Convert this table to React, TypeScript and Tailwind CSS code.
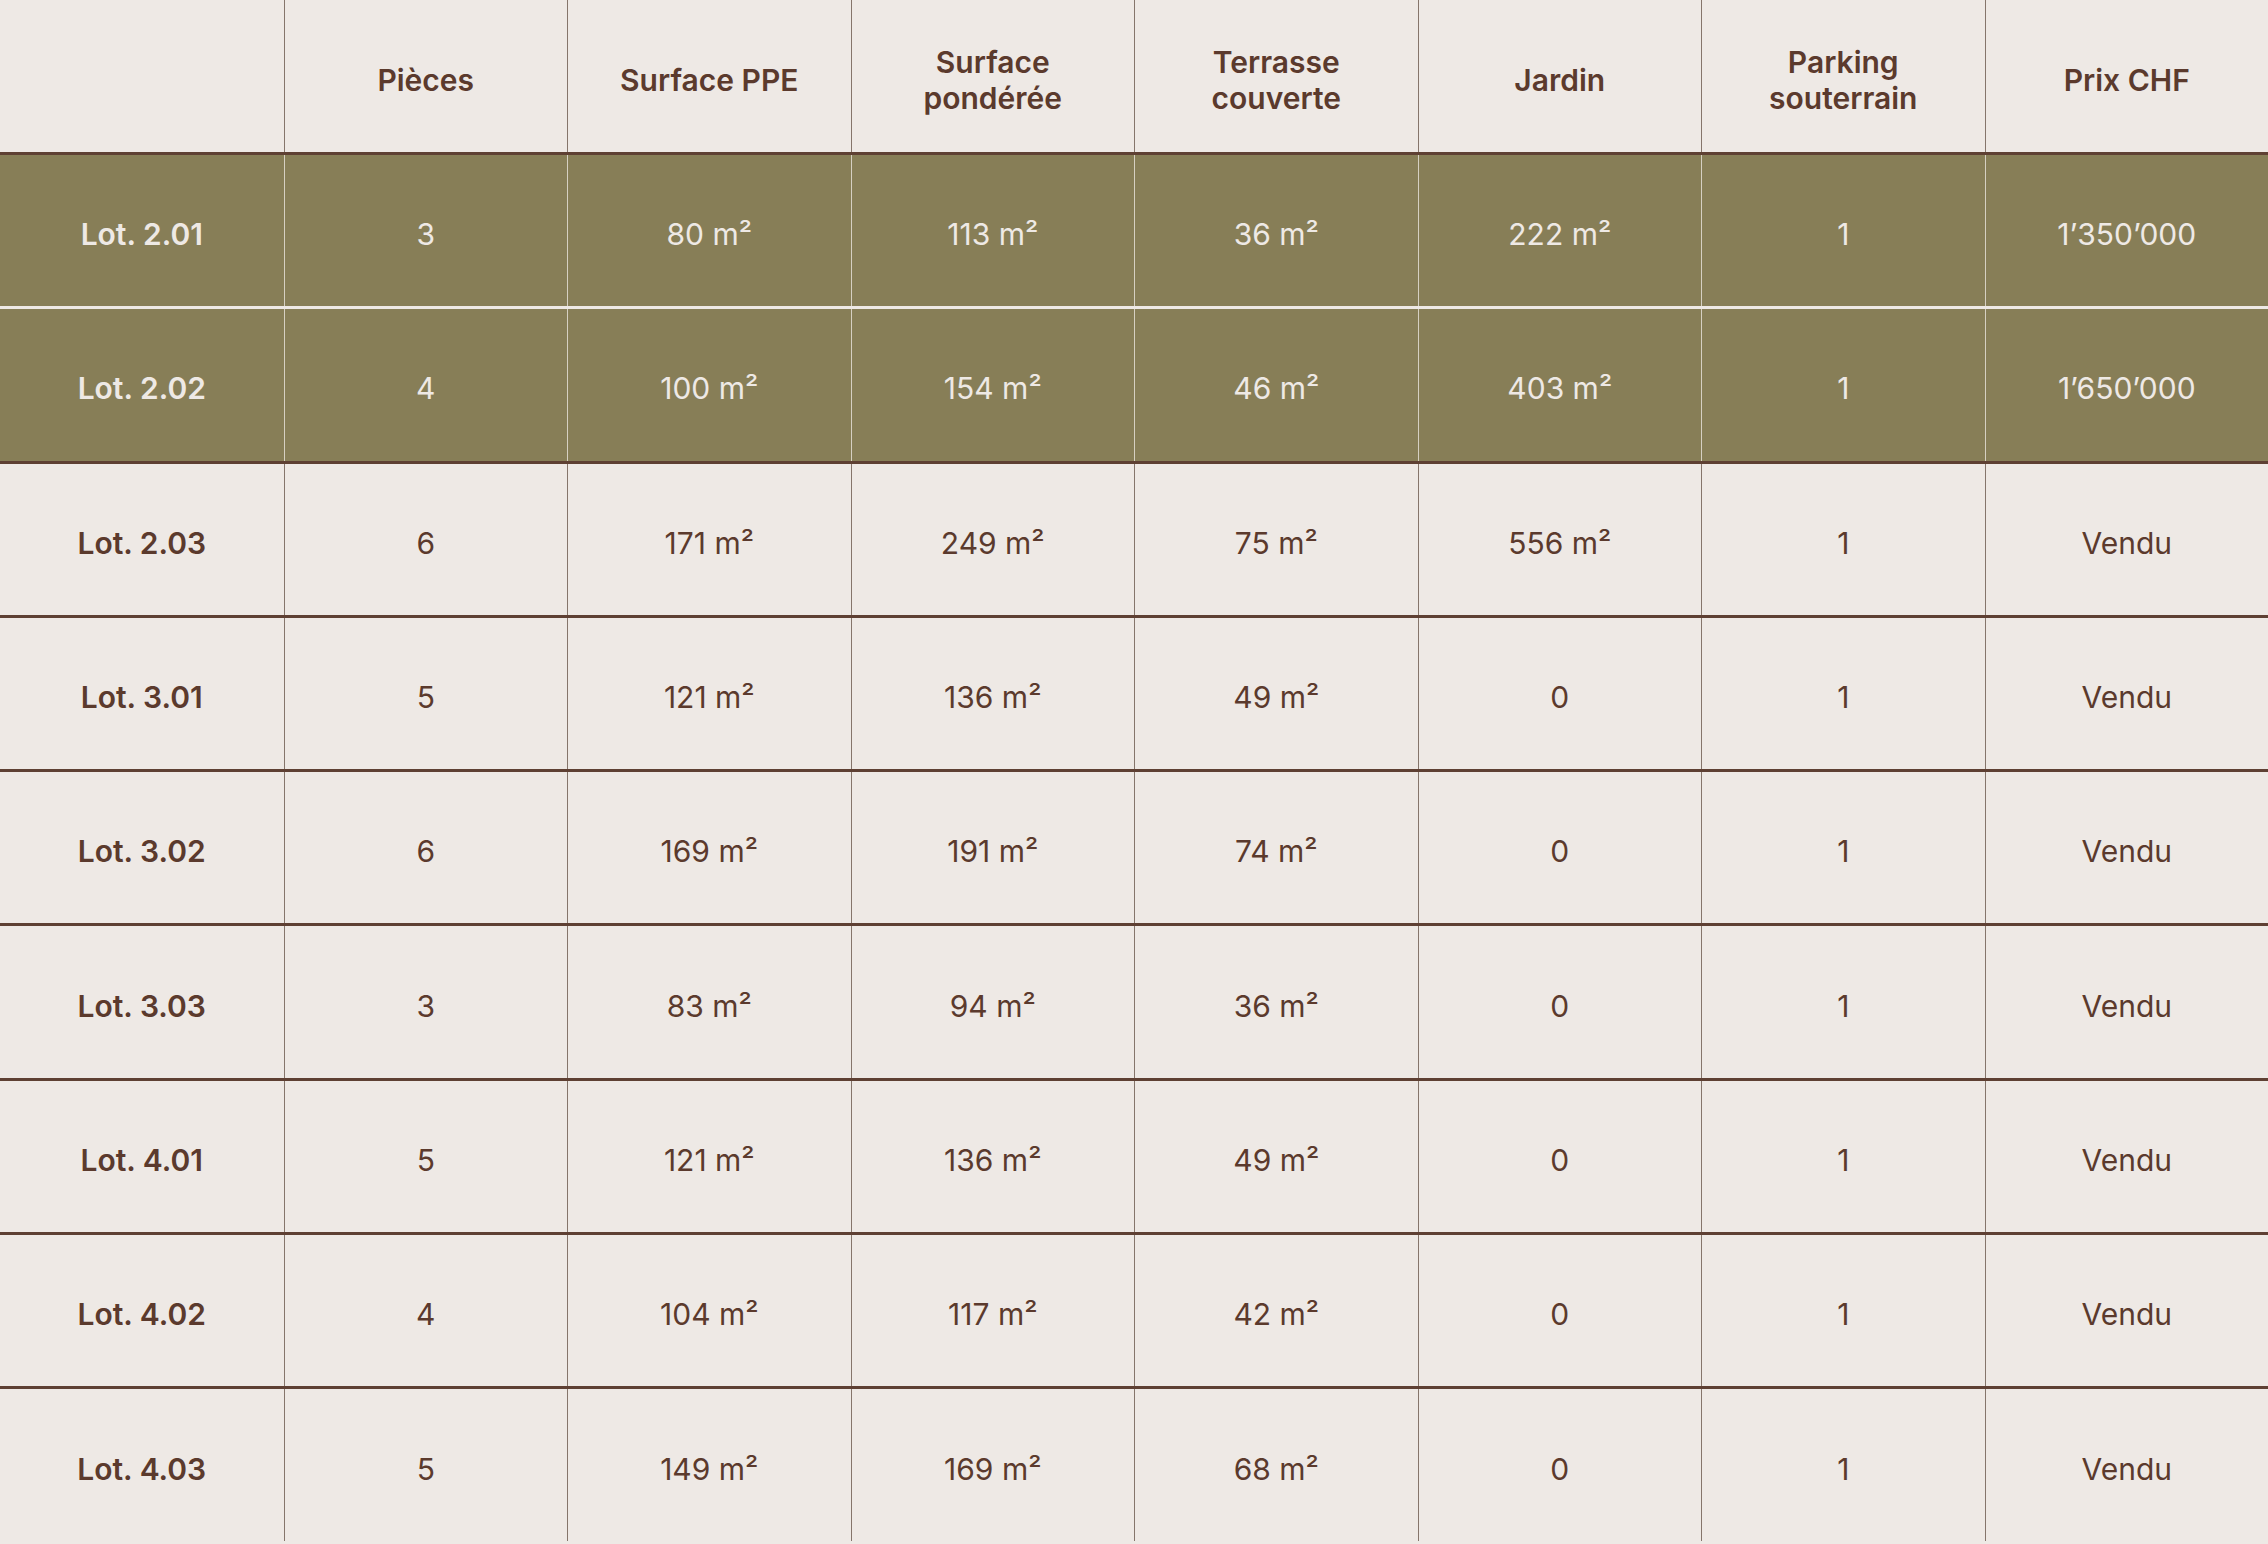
import React from "react";

type Row = { lot: string; cells: string[]; highlight?: boolean };

const rows: Row[] = [
  { lot: "Lot. 2.01", cells: ["3", "80 m²", "113 m²", "36 m²", "222 m²", "1", "1’350’000"], highlight: true },
  { lot: "Lot. 2.02", cells: ["4", "100 m²", "154 m²", "46 m²", "403 m²", "1", "1’650’000"], highlight: true },
  { lot: "Lot. 2.03", cells: ["6", "171 m²", "249 m²", "75 m²", "556 m²", "1", "Vendu"] },
  { lot: "Lot. 3.01", cells: ["5", "121 m²", "136 m²", "49 m²", "0", "1", "Vendu"] },
  { lot: "Lot. 3.02", cells: ["6", "169 m²", "191 m²", "74 m²", "0", "1", "Vendu"] },
  { lot: "Lot. 3.03", cells: ["3", "83 m²", "94 m²", "36 m²", "0", "1", "Vendu"] },
  { lot: "Lot. 4.01", cells: ["5", "121 m²", "136 m²", "49 m²", "0", "1", "Vendu"] },
  { lot: "Lot. 4.02", cells: ["4", "104 m²", "117 m²", "42 m²", "0", "1", "Vendu"] },
  { lot: "Lot. 4.03", cells: ["5", "149 m²", "169 m²", "68 m²", "0", "1", "Vendu"] },
];

const headers: React.ReactNode[] = [
  "",
  "Pièces",
  "Surface PPE",
  <>Surface<br />pondérée</>,
  <>Terrasse<br />couverte</>,
  "Jardin",
  <>Parking<br />souterrain</>,
  "Prix CHF",
];

export default function App() {
  return (
    <div
      className="w-[2268px] h-[1544px] overflow-hidden bg-[#eee9e5] text-[#5b3a2d]"
      style={{ fontFamily: "Inter, 'Noto Sans', sans-serif" }}
    >
      <div className="grid grid-cols-8 h-[155px] border-b-[3px] border-[#5e4033]">
        {headers.map((h, i) => (
          <div
            key={i}
            className={`flex items-center justify-center text-center pt-[8px] text-[30px] leading-[36px] font-semibold ${
              i > 0 ? "border-l border-[#85756b]" : ""
            }`}
          >
            <span>{h}</span>
          </div>
        ))}
      </div>
      {rows.map((r, ri) => {
        const next = rows[ri + 1];
        const borderColor = !next
          ? "border-transparent"
          : r.highlight && next.highlight
          ? "border-[#eee9e5]"
          : "border-[#5e4033]";
        return (
          <div
            key={r.lot}
            className={`grid grid-cols-8 h-[154.3px] border-b-[3px] ${borderColor} ${
              r.highlight ? "bg-[#877e57] text-[#eee9e5]" : ""
            }`}
          >
            <div className="flex items-center justify-center pt-[8px] text-[30px] font-semibold">
              {r.lot}
            </div>
            {r.cells.map((c, ci) => (
              <div
                key={ci}
                className={`flex items-center justify-center pt-[8px] text-[30px] font-normal border-l ${
                  r.highlight ? "border-[#d6d0c2]" : "border-[#85756b]"
                }`}
              >
                {c}
              </div>
            ))}
          </div>
        );
      })}
    </div>
  );
}
